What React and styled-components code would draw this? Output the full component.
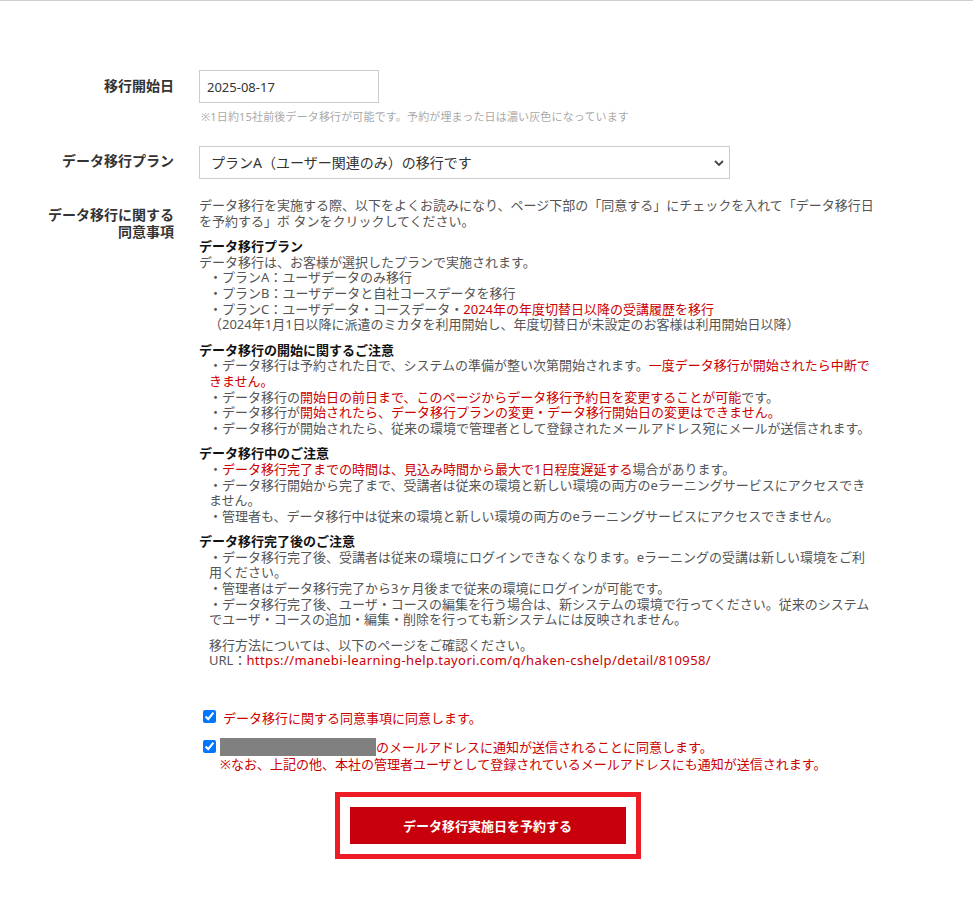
import React from "react";
import styled, { createGlobalStyle } from "styled-components";

const GlobalStyle = createGlobalStyle`
  html, body {
    margin: 0;
    padding: 0;
    background: #fff;
  }
  body {
    font-family: "Noto Sans", "Noto Sans CJK JP", sans-serif;
    color: #555;
    font-size: 13px;
  }
`;

const Page = styled.div`
  border-top: 1px solid #cfcfcf;
  min-height: 897px;
  box-sizing: border-box;
`;

const FieldRow = styled.div`
  display: grid;
  grid-template-columns: 174px 677px;
  column-gap: 25px;
  margin-top: ${(p) => p.$gap}px;
`;

const Label = styled.div`
  text-align: right;
  font-size: 14px;
  font-weight: 700;
  line-height: 17px;
  color: #333;
  padding-top: ${(p) => p.$top}px;
`;

const Field = styled.div`
  display: flex;
  flex-direction: column;
  align-items: flex-start;
`;

const TextInput = styled.input`
  box-sizing: border-box;
  width: 180px;
  height: 33px;
  border: 1px solid #ccc;
  border-radius: 0;
  padding: 0 7px;
  font-family: inherit;
  font-size: 13px;
  color: #333;
  outline: none;
`;

const Hint = styled.p`
  margin: 7px 0 0 2px;
  font-size: 11px;
  line-height: 14px;
  letter-spacing: 0.15px;
  color: #aaa;
`;

const SelectWrap = styled.div`
  position: relative;
  width: 531px;
`;

const Select = styled.select`
  appearance: none;
  box-sizing: border-box;
  width: 100%;
  height: 33px;
  border: 1px solid #ccc;
  border-radius: 0;
  background: #fff;
  padding: 0 30px 0 11px;
  font-family: inherit;
  font-size: 14px;
  color: #333;
  outline: none;
`;

const Chevron = styled.svg`
  position: absolute;
  right: 6px;
  top: 14px;
  width: 10px;
  height: 6px;
  pointer-events: none;
`;

const Terms = styled.div`
  line-height: 15.6px;
  font-size: 13px;
  color: #555;
`;

const Para = styled.p`
  margin: 0;
`;

const Section = styled.div`
  margin-top: 10px;
`;

const SectionTitle = styled.div`
  font-weight: 700;
  color: #111;
`;

const Item = styled.div`
  padding-left: ${(p) => (p.$flush ? 0 : 10)}px;
`;

const Red = styled.span`
  color: #cc0000;
`;

const Link = styled.a`
  color: #cc0000;
  text-decoration: none;
  letter-spacing: 0.4px;
`;

const AgreeList = styled.div`
  display: flex;
  flex-direction: column;
  gap: 12px;
`;

const AgreeRow = styled.label`
  display: flex;
  align-items: flex-start;
  gap: 4px;
  color: #cc0000;
  font-size: 13px;
  line-height: 16px;
`;

const Check = styled.input`
  width: 13px;
  height: 13px;
  margin: ${(p) => p.$top}px 0 0 4px;
  flex: none;
`;

const AgreeText = styled.div`
  padding-left: ${(p) => p.$pad}px;
`;

const AgreeLine = styled.div`
  display: flex;
  align-items: center;
  height: 18px;
`;

const Masked = styled.span`
  display: inline-block;
  width: 156px;
  height: 18px;
  background: #808080;
  flex: none;
`;

const SubmitFrame = styled.div`
  width: fit-content;
  margin: 20px auto 0;
  border: 5px solid #ee1c25;
  padding: 10px;
  transform: translateX(1px);
`;

const SubmitButton = styled.button`
  display: block;
  width: 276px;
  height: 37px;
  border: none;
  border-radius: 0;
  background: #c7000b;
  color: #fff;
  font-family: inherit;
  font-size: 13px;
  font-weight: 700;
  cursor: pointer;
`;

export default function App() {
  return (
    <>
      <GlobalStyle />
      <Page>
        <FieldRow $gap={69}>
          <Label $top={7}>移行開始日</Label>
          <Field>
            <TextInput type="text" defaultValue="2025-08-17" readOnly />
            <Hint>※1日約15社前後データ移行が可能です。予約が埋まった日は濃い灰色になっています</Hint>
          </Field>
        </FieldRow>

        <FieldRow $gap={22}>
          <Label $top={6}>データ移行プラン</Label>
          <Field>
            <SelectWrap>
              <Select defaultValue="a">
                <option value="a">プランA（ユーザー関連のみ）の移行です</option>
                <option value="b">プランB（ユーザー・自社コース）の移行です</option>
                <option value="c">プランC（受講履歴を含む）の移行です</option>
              </Select>
              <Chevron viewBox="0 0 10 6">
                <path d="M1 1l4 4 4-4" fill="none" stroke="#444" strokeWidth="1.8" />
              </Chevron>
            </SelectWrap>
          </Field>
        </FieldRow>

        <FieldRow $gap={19}>
          <Label $top={8}>
            データ移行に関する
            <br />
            同意事項
          </Label>
          <Terms>
            <Para>
              データ移行を実施する際、以下をよくお読みになり、ページ下部の「同意する」にチェックを入れて「データ移行日を予約する」ボ タンをクリックしてください。
            </Para>

            <Section>
              <SectionTitle>データ移行プラン</SectionTitle>
              <Item $flush>データ移行は、お客様が選択したプランで実施されます。</Item>
              <Item>・プランA：ユーザデータのみ移行</Item>
              <Item>・プランB：ユーザデータと自社コースデータを移行</Item>
              <Item>
                ・プランC：ユーザデータ・コースデータ・<Red>2024年の年度切替日以降の受講履歴を移行</Red>
              </Item>
              <Item>（2024年1月1日以降に派遣のミカタを利用開始し、年度切替日が未設定のお客様は利用開始日以降）</Item>
            </Section>

            <Section>
              <SectionTitle>データ移行の開始に関するご注意</SectionTitle>
              <Item>
                ・データ移行は予約された日で、システムの準備が整い次第開始されます。<Red>一度データ移行が開始されたら中断できません。</Red>
              </Item>
              <Item>
                ・データ移行の<Red>開始日の前日まで、このページからデータ移行予約日を変更することが可能</Red>です。
              </Item>
              <Item>
                ・データ移行が<Red>開始されたら、データ移行プランの変更・データ移行開始日の変更はできません。</Red>
              </Item>
              <Item>・データ移行が開始されたら、従来の環境で管理者として登録されたメールアドレス宛にメールが送信されます。</Item>
            </Section>

            <Section>
              <SectionTitle>データ移行中のご注意</SectionTitle>
              <Item>
                ・<Red>データ移行完了までの時間は、見込み時間から最大で1日程度遅延する</Red>場合があります。
              </Item>
              <Item>・データ移行開始から完了まで、受講者は従来の環境と新しい環境の両方のeラーニングサービスにアクセスできません。</Item>
              <Item>・管理者も、データ移行中は従来の環境と新しい環境の両方のeラーニングサービスにアクセスできません。</Item>
            </Section>

            <Section>
              <SectionTitle>データ移行完了後のご注意</SectionTitle>
              <Item>・データ移行完了後、受講者は従来の環境にログインできなくなります。eラーニングの受講は新しい環境をご利用ください。</Item>
              <Item>・管理者はデータ移行完了から3ヶ月後まで従来の環境にログインが可能です。</Item>
              <Item>・データ移行完了後、ユーザ・コースの編集を行う場合は、新システムの環境で行ってください。従来のシステムでユーザ・コースの追加・編集・削除を行っても新システムには反映されません。</Item>
            </Section>

            <Section>
              <Item>移行方法については、以下のページをご確認ください。</Item>
              <Item>
                URL：
                <Link href="#help">https://manebi-learning-help.tayori.com/q/haken-cshelp/detail/810958/</Link>
              </Item>
            </Section>
          </Terms>
        </FieldRow>

        <FieldRow $gap={41}>
          <div />
          <AgreeList>
            <AgreeRow>
              <Check type="checkbox" defaultChecked $top={0} />
              <AgreeText $pad={3}>データ移行に関する同意事項に同意します。</AgreeText>
            </AgreeRow>
            <AgreeRow>
              <Check type="checkbox" defaultChecked $top={2} />
              <AgreeText $pad={0}>
                <AgreeLine>
                  <Masked />
                  <span>のメールアドレスに通知が送信されることに同意します。</span>
                </AgreeLine>
                <div>※なお、上記の他、本社の管理者ユーザとして登録されているメールアドレスにも通知が送信されます。</div>
              </AgreeText>
            </AgreeRow>
          </AgreeList>
        </FieldRow>

        <SubmitFrame>
          <SubmitButton type="button">データ移行実施日を予約する</SubmitButton>
        </SubmitFrame>
      </Page>
    </>
  );
}
